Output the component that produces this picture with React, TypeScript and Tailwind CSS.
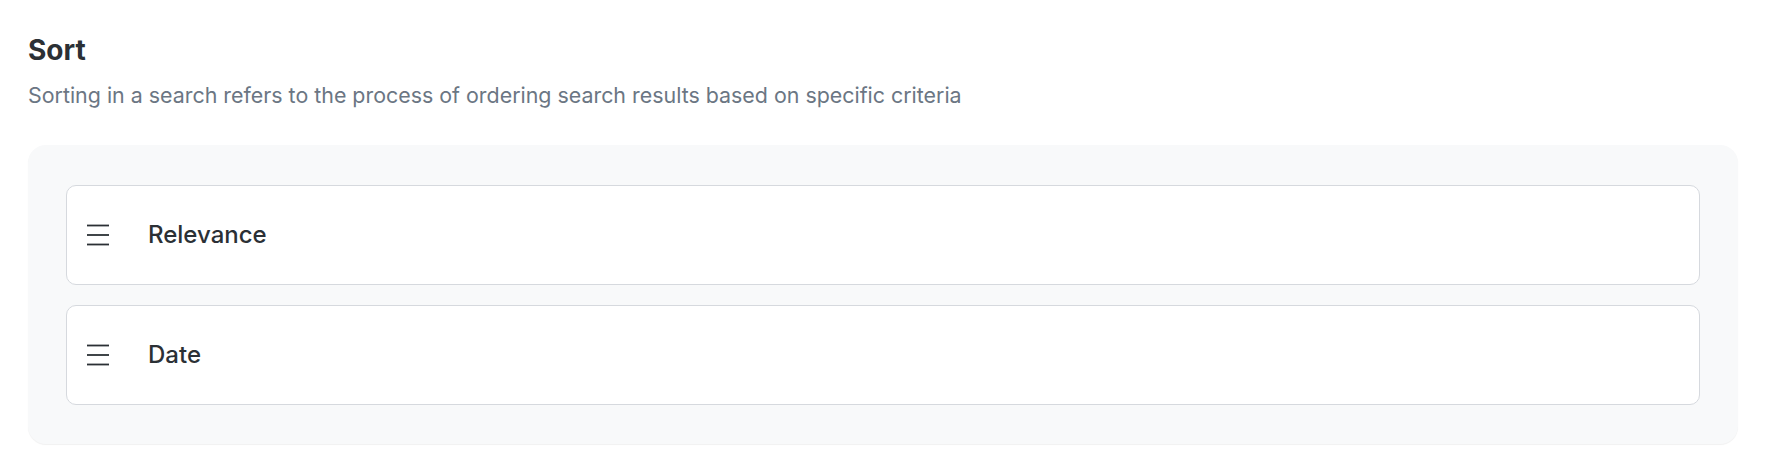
import React from 'react';

const SortHandle: React.FC = () => (
  <svg width="24" height="24" viewBox="0 0 24 24" fill="none" stroke="currentColor" strokeWidth="1.8" className="shrink-0 text-[#2b3035]">
    <line x1="1" y1="2.5" x2="23" y2="2.5" />
    <line x1="1" y1="12" x2="23" y2="12" />
    <line x1="1" y1="21.5" x2="23" y2="21.5" />
  </svg>
);

const options = ['Relevance', 'Date'];

export default function App() {
  return (
    <div className="min-h-screen bg-white px-[28px] pt-[33px] font-['Inter',sans-serif]">
      <h2 className="text-[28px] leading-[34px] font-bold text-[#2b3035]">Sort</h2>
      <p className="mt-[14px] text-[21.4px] leading-[28px] text-[#6b7683]">
        Sorting in a search refers to the process of ordering search results based on specific criteria
      </p>
      <div className="mt-[36px] rounded-[18px] bg-[#f8f9fa] px-[38px] pt-[40px] pb-[39px] shadow-[0_1px_1px_rgba(0,0,0,0.06)] flex flex-col gap-[20px]">
        {options.map((label) => (
          <div
            key={label}
            className="flex h-[100px] items-center gap-[38px] rounded-[10px] border border-[#d6d9de] bg-white px-[19px]"
          >
            <SortHandle />
            <span className="text-[24px] font-medium text-[#2b3035]">{label}</span>
          </div>
        ))}
      </div>
    </div>
  );
}
